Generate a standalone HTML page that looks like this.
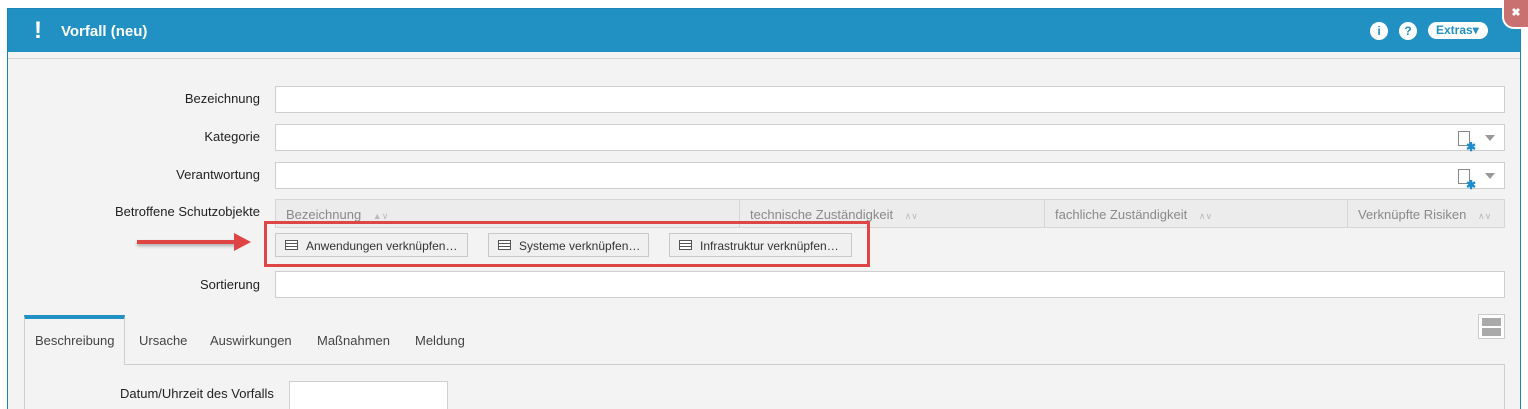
<!DOCTYPE html>
<html><head><meta charset="utf-8"><style>
*{box-sizing:border-box;margin:0;padding:0}
html,body{width:1528px;height:409px;overflow:hidden}
body{background:#fff;font-family:"Liberation Sans",sans-serif;font-size:13px;color:#333;position:relative}
.dlg{position:absolute;left:7px;top:8px;width:1514px;height:401px;background:#f3f3f3;border:1px solid #1f86b8;border-bottom:none}
.hdr{position:absolute;left:0;top:0;right:0;height:43px;background:#2191c4;color:#fff}
.hdr .t{position:absolute;left:53px;top:14px;font-size:15px;font-weight:bold}
.hdr .ex{position:absolute;left:26px;top:8px;font-size:24px;font-weight:bold}
.a{position:absolute}
.lbl{position:absolute;right:1268px;font-size:13px;color:#222;text-align:right;white-space:nowrap}
.inp{position:absolute;left:275px;width:1230px;height:27px;background:#fff;border:1px solid #cfcfcf}
.th{position:absolute;top:199px;height:29px;background:#ececec;border:1px solid #d6d6d6;color:#8a8a8a;font-size:13px;padding:7px 10px}
.btn{position:absolute;top:233px;height:24px;background:#f0f0f0;border:1px solid #c8c8c8;font-size:12px;color:#333;padding:5px 6px 0 30px;white-space:nowrap;overflow:hidden}
.btn i{position:absolute;left:9px;top:6px;width:13px;height:10px;border:1.5px solid #555;background:repeating-linear-gradient(#fff 0 2px,#555 2px 3px)}
.tab{position:absolute;top:333px;color:#444;font-size:13px}
.circ{position:absolute;top:22px;width:18px;height:18px;border-radius:50%;background:#fff;color:#2191c4;font-weight:bold;font-size:12px;text-align:center;line-height:18px}
</style></head><body>
<div class="dlg">
<div class="hdr"><span class="ex">!</span><span class="t">Vorfall (neu)</span></div>
</div>
<div class="circ" style="left:1370px">i</div>
<div class="circ" style="left:1399px">?</div>
<div class="a" style="left:1428px;top:22px;width:60px;height:17px;border-radius:9px;background:#fff;color:#2191c4;font-weight:bold;font-size:12px;line-height:17px;padding-left:8px">Extras▾</div>
<div class="a" style="left:1502px;top:0;width:26px;height:29px;background:#c97070;border-radius:0 0 0 12px;border-left:2px solid #fff;border-bottom:2px solid #fff;color:#fff;font-weight:bold;font-size:11px;text-align:center;line-height:26px">✖</div>
<div class="a" style="left:8px;top:58px;width:1512px;border-top:1px solid #d6d6d6"></div>

<div class="lbl" style="top:91px">Bezeichnung</div><div class="inp" style="top:86px"></div>
<div class="lbl" style="top:129px">Kategorie</div><div class="inp" style="top:124px"></div>
<div class="lbl" style="top:167px">Verantwortung</div><div class="inp" style="top:162px"></div>
<div class="a" style="left:1458px;top:131px;width:12px;height:15px;border:1px solid #888;background:#fff"></div><div class="a" style="left:1466px;top:140px;color:#1c8ccc;font-size:12px;font-weight:bold">✱</div><div class="a" style="left:1485px;top:135px;border:5px solid transparent;border-top:6px solid #999"></div>
<div class="a" style="left:1458px;top:169px;width:12px;height:15px;border:1px solid #888;background:#fff"></div><div class="a" style="left:1466px;top:178px;color:#1c8ccc;font-size:12px;font-weight:bold">✱</div><div class="a" style="left:1485px;top:173px;border:5px solid transparent;border-top:6px solid #999"></div>

<div class="lbl" style="top:204px">Betroffene Schutzobjekte</div>
<div class="th" style="left:275px;width:465px">Bezeichnung <span style="color:#bbb;font-size:9px;margin-left:8px">▲∨</span></div>
<div class="th" style="left:739px;width:306px">technische Zuständigkeit <span style="color:#bbb;font-size:9px;margin-left:8px">∧∨</span></div>
<div class="th" style="left:1044px;width:304px">fachliche Zuständigkeit <span style="color:#bbb;font-size:9px;margin-left:8px">∧∨</span></div>
<div class="th" style="left:1347px;width:158px">Verknüpfte Risiken <span style="color:#bbb;font-size:9px;margin-left:8px">∧∨</span></div>
<div class="btn" style="left:275px;width:193px"><i></i>Anwendungen verknüpfen…</div>
<div class="btn" style="left:488px;width:161px"><i></i>Systeme verknüpfen…</div>
<div class="btn" style="left:669px;width:183px"><i></i>Infrastruktur verknüpfen…</div>
<div class="a" style="left:264px;top:221px;width:606px;height:46px;border:3px solid #e04545"></div>
<div class="a" style="left:137px;top:240px;width:100px;height:4px;background:#e04545;box-shadow:0 2px 3px rgba(0,0,0,.3)"></div>
<div class="a" style="left:234px;top:233px;border-left:17px solid #e04545;border-top:9px solid transparent;border-bottom:9px solid transparent"></div>

<div class="lbl" style="top:277px">Sortierung</div><div class="inp" style="top:271px"></div>

<div class="a" style="left:24px;top:364px;width:1481px;height:45px;border:1px solid #cfcfcf;border-bottom:none;background:#f3f3f3"></div>
<div class="a" style="left:24px;top:315px;width:101px;height:50px;border:1px solid #cfcfcf;border-bottom:none;border-top:4px solid #2191c4;background:#f3f3f3"></div>
<div class="tab" style="left:35px">Beschreibung</div>
<div class="tab" style="left:139px">Ursache</div>
<div class="tab" style="left:210px">Auswirkungen</div>
<div class="tab" style="left:317px">Maßnahmen</div>
<div class="tab" style="left:415px">Meldung</div>
<div class="a" style="left:1478px;top:314px;width:27px;height:25px;border:1px solid #ccc;background:#fff;padding:3px"><div style="height:8px;background:#aaa;margin-bottom:2px"></div><div style="height:8px;background:#aaa"></div></div>
<div class="a" style="left:120px;top:386px;font-size:13px;color:#222">Datum/Uhrzeit des Vorfalls</div>
<div class="a" style="left:289px;top:381px;width:159px;height:28px;background:#fff;border:1px solid #cfcfcf;border-bottom:none"></div>
</body></html>
